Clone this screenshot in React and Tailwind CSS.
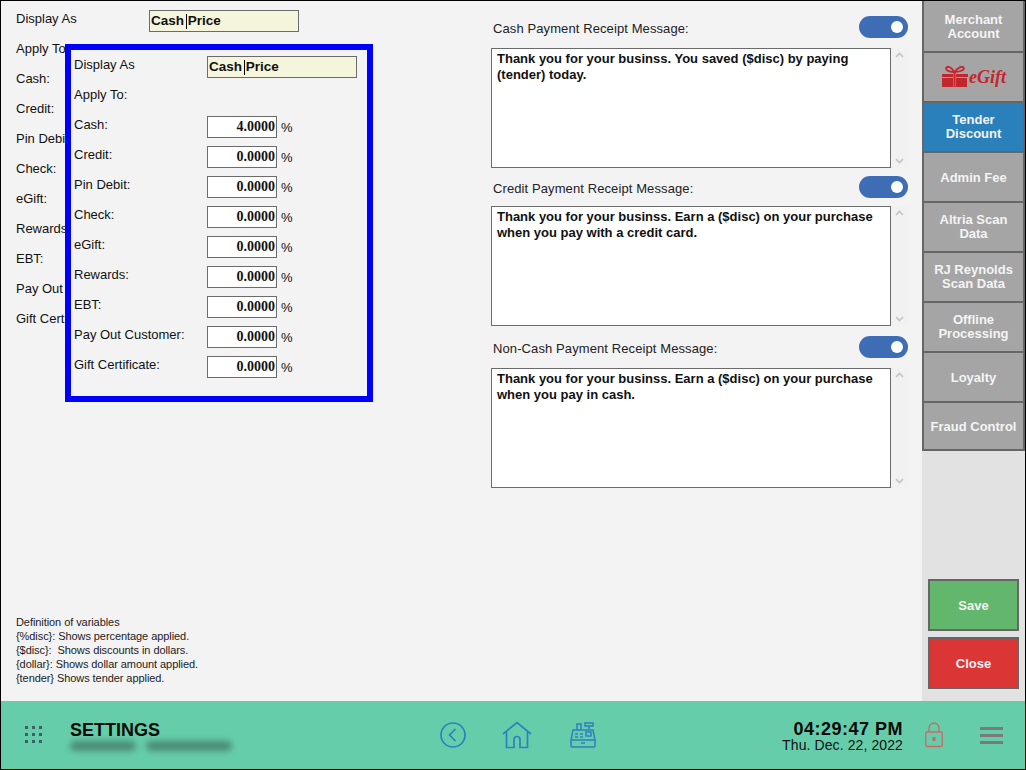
const tenders = ["Cash", "Credit", "Pin Debit", "Check", "eGift", "Rewards", "EBT", "Pay Out Customer", "Gift Certificate"];

const messages = [
  { label: "Cash Payment Receipt Message:", text: "Thank you for your businss. You saved ($disc) by paying (tender) today.", box: "h-[160px]", head: "h-[32px]" },
  { label: "Credit Payment Receipt Message:", text: "Thank you for your businss. Earn a ($disc) on your purchase when you pay with a credit card.", box: "h-[160px]", head: "h-[30px]" },
  { label: "Non-Cash Payment Receipt Message:", text: "Thank you for your businss. Earn a ($disc) on your purchase when you pay in cash.", box: "h-[152px]", head: "h-[32px]" },
];

const navItems = [
  { name: "Merchant Account", h: "h-[52px] pt-[1px]" },
  { name: "eGift", h: "h-[50px]" },
  { name: "Tender Discount", h: "h-[50px]" },
  { name: "Admin Fee", h: "h-[50px] pt-[1px]" },
  { name: "Altria Scan Data", h: "h-[50px]" },
  { name: "RJ Reynolds Scan Data", h: "h-[50px]" },
  { name: "Offline Processing", h: "h-[50px]" },
  { name: "Loyalty", h: "h-[50px] pt-[1px]" },
  { name: "Fraud Control", h: "h-[48px] pt-[1px]" },
];

// Same form is drawn twice: the page itself and the highlighted callout on top
function DiscountForm() {
  return (
    <div className="flex flex-col text-[13px] leading-[14px] text-[#111]">
      <div className="flex h-[30px] items-start">
        <span className="w-[133px] pt-[1px]">Display As</span>
        <div className="-mt-[1px] h-[22px] w-[150px] whitespace-pre border border-[#6b6b6b] bg-[#f5f5dc] px-[1px] text-[13.5px] font-bold leading-[20px]">
          Cash <span className="-ml-[1.5px] mr-[0.5px] inline-block h-[15px] w-[1px] bg-black align-middle" />Price
        </div>
      </div>
      <div className="flex h-[30px] items-start pt-[1px]">Apply To:</div>
      {tenders.map((name) => (
        <div key={name} className="flex h-[30px] items-start">
          <span className="w-[133px] pt-[1px]">{name}:</span>
          <div className="-mt-[1px] flex h-[22px] w-[70px] items-center justify-end border border-[#6b6b6b] bg-white pr-[1px] font-['Liberation_Serif',serif] text-[14px] font-bold">
            {name === "Cash" ? "4.0000" : "0.0000"}
          </div>
          <span className="ml-[4px] mt-[4px]">%</span>
        </div>
      ))}
    </div>
  );
}

function Toggle() {
  return (
    <div className="flex h-[22px] w-[49px] items-center justify-end rounded-full bg-[#3e6db5] pr-[5px]">
      <div className="h-[12px] w-[12px] rounded-full bg-white" />
    </div>
  );
}

function MessageBox({ label, text, box, head }) {
  return (
    <div className={`flex flex-col ${box}`}>
      <div className={`flex items-start justify-between pl-[2px] ${head}`}>
        <span className="pt-[6px] text-[13px] leading-[14px] tracking-[0.1px] text-[#222]">{label}</span>
        <Toggle />
      </div>
      <div className="flex h-[120px]">
        <div className="w-[400px] border border-[#6b6b6b] bg-white px-[5px] py-[2px] text-[13px] font-bold leading-[16px] text-[#111]">{text}</div>
        <div className="flex w-[17px] flex-col items-center justify-between bg-[#f1f1f1] py-[4px]">
          <svg width="9" height="6" viewBox="0 0 9 6" fill="none" stroke="#c4c4c4" strokeWidth="1.6"><path d="M1 5l3.5-3.5L8 5" /></svg>
          <svg width="9" height="6" viewBox="0 0 9 6" fill="none" stroke="#c4c4c4" strokeWidth="1.6"><path d="M1 1l3.5 3.5L8 1" /></svg>
        </div>
      </div>
    </div>
  );
}

function EGiftLogo() {
  return (
    <div className="flex items-center justify-center text-[#c1272d]">
      <svg width="28" height="22" viewBox="0 0 28 22" fill="currentColor">
        <path d="M1 8h11v3H1zM15 8h12v3H15zM1 12h11v9H1zM15 12h11v9H15zM12.5 6h2v15h-2z" />
        <path d="M13.5 6C10 1 7 0 5.5 1.5S6 6 13.5 6zM13.5 6C17 1 21 0 22.5 1.5S21 6 13.5 6z" fill="none" stroke="currentColor" strokeWidth="1.8" />
      </svg>
      <span className="font-['Liberation_Serif',serif] text-[18px] font-bold italic leading-none">eGift</span>
    </div>
  );
}

function NavButton({ name, h }) {
  const active = name === "Tender Discount";
  return (
    <button className={`flex w-full items-center justify-center border-b-2 border-[#666] px-1 text-center text-[13px] font-bold leading-[14px] text-[#f4f4f4] ${h} ${active ? "bg-[#2a80bb]" : "bg-[#a5a5a5]"}`}>
      {name === "eGift" ? <EGiftLogo /> : name}
    </button>
  );
}

function DotGrid() {
  const dots = [];
  for (let y = 0; y < 3; y++) {
    for (let x = 0; x < 3; x++) {
      dots.push(<rect key={`${x}-${y}`} x={x * 7} y={y * 7} width="3" height="3" fill="#3f5f66" />);
    }
  }
  return <svg width="18" height="18" viewBox="0 0 18 18">{dots}</svg>;
}

export default function App() {
  return (
    <div className="flex h-[770px] w-[1026px] flex-col overflow-hidden border border-black bg-[#f3f3f3] font-['Liberation_Sans',Arial,sans-serif]">
      <div className="flex h-[700px]">
        <main className="relative flex flex-1">
          <div className="flex w-[490px] flex-col justify-between pb-[16px] pl-[15px] pt-[10px]">
            <DiscountForm />
            <div className="text-[11px] leading-[14px] tracking-[-0.07px] text-[#222]">
              <div>Definition of variables</div>
              <div>{"{%disc}: Shows percentage applied."}</div>
              <div className="whitespace-pre">{"{$disc}:  Shows discounts in dollars."}</div>
              <div>{"{dollar}: Shows dollar amount applied."}</div>
              <div>{"{tender} Shows tender applied."}</div>
            </div>
          </div>

          <div className="flex w-[417px] flex-col pt-[15px]">
            {messages.map((m) => (
              <MessageBox key={m.label} {...m} />
            ))}
          </div>

          {/* blue callout over the form */}
          <div className="absolute left-[64px] top-[43px] h-[358px] w-[308px] border-[6px] border-[#0000ff] bg-[#f3f3f3] pl-[3px] pt-[7px]">
            <DiscountForm />
          </div>
        </main>

        <aside className="flex w-[103px] flex-col justify-between bg-[#e2e2e2]">
          <div className="flex flex-col border-l-2 border-r-2 border-[#666]">
            {navItems.map((item) => (
              <NavButton key={item.name} {...item} />
            ))}
          </div>
          <div className="flex flex-col gap-[6px] pb-[12px] pl-[6px]">
            <button className="h-[52px] w-[91px] border-2 border-[#666] bg-[#62b76c] pt-[1px] text-[13px] font-bold text-[#f4f4f4]">Save</button>
            <button className="h-[52px] w-[91px] border-2 border-[#666] bg-[#dc3535] pt-[1px] text-[13px] font-bold text-[#f4f4f4]">Close</button>
          </div>
        </aside>
      </div>

      <footer className="flex h-[68px] items-center bg-[#66cdaa]">
        <div className="ml-[24px] w-[45px]"><DotGrid /></div>
        <div className="relative w-[369px] self-start pt-[20px]">
          <div className="text-[18px] font-bold leading-[18px] text-[#0a0a0a]">SETTINGS</div>
          <div className="absolute left-0 top-[40px] flex gap-[10px]">
            <div className="h-[10px] w-[66px] rounded-full bg-[#4a8a76] blur-[3px]" />
            <div className="h-[10px] w-[86px] rounded-full bg-[#4a8a76] blur-[3px]" />
          </div>
        </div>

        <div className="flex items-center text-[#2f7fc1]">
          <svg width="28" height="28" viewBox="0 0 28 28" fill="none" stroke="currentColor" strokeWidth="1.7">
            <circle cx="14" cy="14" r="12" />
            <path d="M16.5 8l-6 6 6 6" />
          </svg>
          <svg className="ml-[35px]" width="30" height="28" viewBox="0 0 30 28" fill="none" stroke="currentColor" strokeWidth="1.7">
            <path d="M1 13L15 1.5 29 13" />
            <path d="M4.5 11v15.5h7.5v-8a3 3 0 0 1 6 0v8h7.5V11" />
          </svg>
          <svg className="ml-[38px]" width="26" height="26" viewBox="0 0 26 26" fill="none" stroke="currentColor" strokeWidth="1.5">
            <path d="M7 8V2h4v6M15 1h8v3h-8zM19 4v3" />
            <path d="M3 8h20l2 10H1zM1 18h24v6a1 1 0 0 1-1 1H2a1 1 0 0 1-1-1z" />
            <path d="M5 12h3M10 12h3M5 15h3M10 15h3M16 10h5v4h-5zM11 21h4" />
          </svg>
        </div>

        <div className="ml-auto flex items-center">
          <div className="mt-[2px] text-right">
            <div className="text-[18px] font-bold leading-[18px] tracking-[0.5px] text-[#0a0a0a]">04:29:47 PM</div>
            <div className="text-[14px] leading-[15px] tracking-[0.1px] text-[#111]">Thu. Dec. 22, 2022</div>
          </div>
          <svg className="ml-[22px]" width="18" height="26" viewBox="0 0 18 26" fill="none" stroke="#c76a64" strokeWidth="1.3">
            <path d="M4 10V6a5 5 0 0 1 10 0v4" />
            <rect x="0.8" y="10" width="16.4" height="14.5" rx="1" />
            <path d="M9 15v4" strokeWidth="3" />
          </svg>
          <div className="ml-[37px] mr-[22px] flex w-[23px] flex-col gap-[4px]">
            <div className="h-[3px] bg-[#7a7a7a]" />
            <div className="h-[3px] bg-[#7a7a7a]" />
            <div className="h-[3px] bg-[#7a7a7a]" />
          </div>
        </div>
      </footer>
    </div>
  );
}
